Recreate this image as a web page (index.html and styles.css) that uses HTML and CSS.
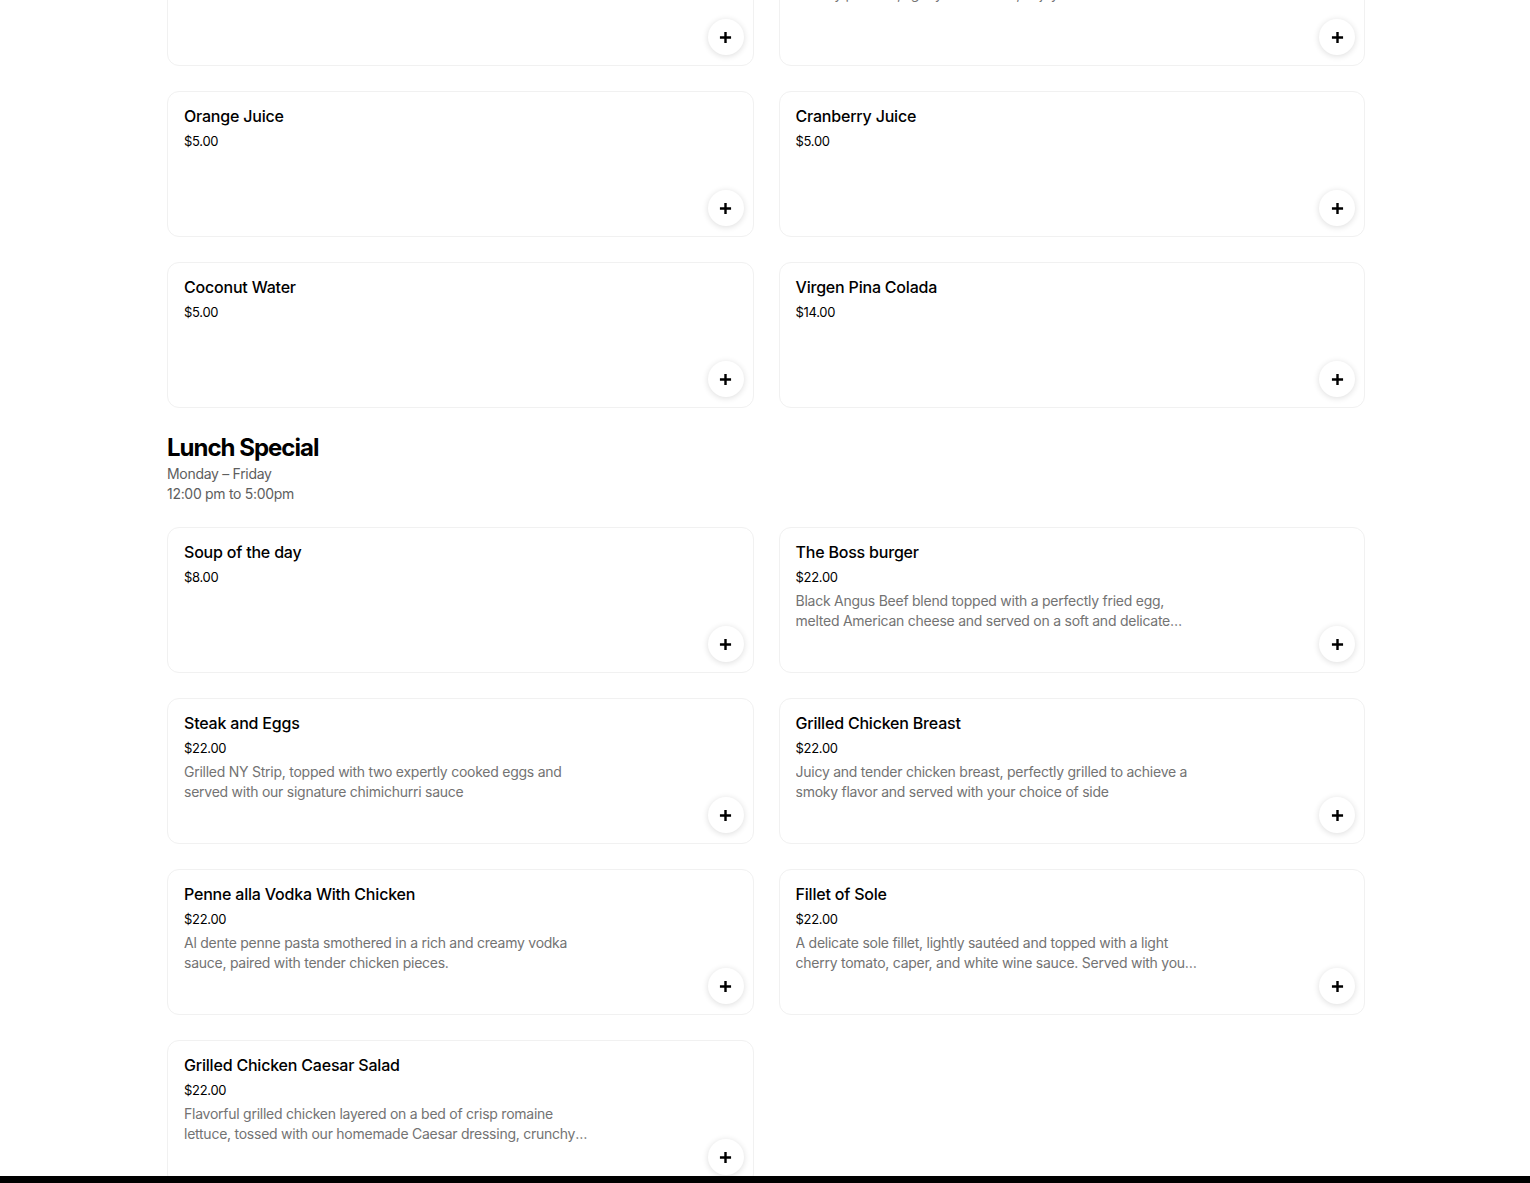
FILE: index.html
```html
<!DOCTYPE html>
<html lang="en">
<head>
  <meta charset="UTF-8" />
  <title>Menu</title>
  <link rel="stylesheet" href="styles.css">
</head>
<body>
  <main class="menu">
    <section class="seccion primera">
      <div class="grid">
        <div class="card">
          <h3 class="nombre">Lemonade</h3>
          <p class="precio">$5.00</p>
          <button class="agregar" aria-label="Add"><svg viewBox="0 0 14 14"><path d="M7 1v12M1 7h12"/></svg></button>
        </div>
        <div class="card">
          <h3 class="nombre">Fresh Fruit Smoothie</h3>
          <p class="precio">$9.00</p>
          <p class="desc">Freshly pressed, lightly sweetened, enjoy.</p>
          <button class="agregar" aria-label="Add"><svg viewBox="0 0 14 14"><path d="M7 1v12M1 7h12"/></svg></button>
        </div>
        <div class="card">
          <h3 class="nombre">Orange Juice</h3>
          <p class="precio">$5.00</p>
          <button class="agregar" aria-label="Add"><svg viewBox="0 0 14 14"><path d="M7 1v12M1 7h12"/></svg></button>
        </div>
        <div class="card">
          <h3 class="nombre">Cranberry Juice</h3>
          <p class="precio">$5.00</p>
          <button class="agregar" aria-label="Add"><svg viewBox="0 0 14 14"><path d="M7 1v12M1 7h12"/></svg></button>
        </div>
        <div class="card">
          <h3 class="nombre">Coconut Water</h3>
          <p class="precio">$5.00</p>
          <button class="agregar" aria-label="Add"><svg viewBox="0 0 14 14"><path d="M7 1v12M1 7h12"/></svg></button>
        </div>
        <div class="card">
          <h3 class="nombre">Virgen Pina Colada</h3>
          <p class="precio">$14.00</p>
          <button class="agregar" aria-label="Add"><svg viewBox="0 0 14 14"><path d="M7 1v12M1 7h12"/></svg></button>
        </div>
      </div>
    </section>

    <section class="seccion">
      <div class="cabecera">
        <h2>Lunch Special</h2>
        <p>Monday – Friday</p>
        <p>12:00 pm to 5:00pm</p>
      </div>
      <div class="grid">
        <div class="card">
          <h3 class="nombre">Soup of the day</h3>
          <p class="precio">$8.00</p>
          <button class="agregar" aria-label="Add"><svg viewBox="0 0 14 14"><path d="M7 1v12M1 7h12"/></svg></button>
        </div>
        <div class="card">
          <h3 class="nombre">The Boss burger</h3>
          <p class="precio">$22.00</p>
          <p class="desc">Black Angus Beef blend topped with a perfectly fried egg, melted American cheese and served on a soft and delicate brioche bun with fries.</p>
          <button class="agregar" aria-label="Add"><svg viewBox="0 0 14 14"><path d="M7 1v12M1 7h12"/></svg></button>
        </div>
        <div class="card">
          <h3 class="nombre">Steak and Eggs</h3>
          <p class="precio">$22.00</p>
          <p class="desc">Grilled NY Strip, topped with two expertly cooked eggs and served with our signature chimichurri sauce</p>
          <button class="agregar" aria-label="Add"><svg viewBox="0 0 14 14"><path d="M7 1v12M1 7h12"/></svg></button>
        </div>
        <div class="card">
          <h3 class="nombre">Grilled Chicken Breast</h3>
          <p class="precio">$22.00</p>
          <p class="desc">Juicy and tender chicken breast, perfectly grilled to achieve a smoky flavor and served with your choice of side</p>
          <button class="agregar" aria-label="Add"><svg viewBox="0 0 14 14"><path d="M7 1v12M1 7h12"/></svg></button>
        </div>
        <div class="card">
          <h3 class="nombre">Penne alla Vodka With Chicken</h3>
          <p class="precio">$22.00</p>
          <p class="desc">Al dente penne pasta smothered in a rich and creamy vodka sauce, paired with tender chicken pieces.</p>
          <button class="agregar" aria-label="Add"><svg viewBox="0 0 14 14"><path d="M7 1v12M1 7h12"/></svg></button>
        </div>
        <div class="card">
          <h3 class="nombre">Fillet of Sole</h3>
          <p class="precio">$22.00</p>
          <p class="desc">A delicate sole fillet, lightly sautéed and topped with a light cherry tomato, caper, and white wine sauce. Served with your choice of side.</p>
          <button class="agregar" aria-label="Add"><svg viewBox="0 0 14 14"><path d="M7 1v12M1 7h12"/></svg></button>
        </div>
        <div class="card">
          <h3 class="nombre">Grilled Chicken Caesar Salad</h3>
          <p class="precio">$22.00</p>
          <p class="desc">Flavorful grilled chicken layered on a bed of crisp romaine lettuce, tossed with our homemade Caesar dressing, crunchy croutons and parmesan.</p>
          <button class="agregar" aria-label="Add"><svg viewBox="0 0 14 14"><path d="M7 1v12M1 7h12"/></svg></button>
        </div>
      </div>
    </section>
  </main>

  <!-- barra inferior -->
  <div class="barra"></div>
</body>
</html>
```

FILE: styles.css
```css
html {
  overflow: hidden;
}

body {
  margin: 0;
  font-family: Inter, "Noto Sans", sans-serif;
  color: #000;
  background: #fff;
}

.menu {
  max-width: 1198px;
  margin: 0 auto;
  padding-left: 2px;
}

.primera {
  margin-top: -80px;
}

.grid {
  display: grid;
  grid-template-columns: 1fr 1fr;
  gap: 25px;
}

.card {
  position: relative;
  height: 146px;
  box-sizing: border-box;
  padding: 14px 16px;
  border: 1px solid #f1f1f1;
  border-radius: 12px;
}

.nombre {
  margin: 0;
  font-size: 16px;
  line-height: 20px;
  font-weight: 500;
  letter-spacing: -0.2px;
}

.precio {
  margin: 5px 0 0;
  font-size: 13px;
  line-height: 20px;
  letter-spacing: -0.3px;
}

.desc {
  margin: 4px 0 0;
  max-width: 405px;
  font-size: 14px;
  line-height: 20px;
  letter-spacing: -0.25px;
  color: #737373;
  display: -webkit-box;
  -webkit-line-clamp: 2;
  -webkit-box-orient: vertical;
  overflow: hidden;
}

/* boton + */
.agregar {
  position: absolute;
  right: 9px;
  bottom: 10px;
  width: 36px;
  height: 36px;
  padding: 0;
  border: none;
  border-radius: 50%;
  background: #fff;
  box-shadow: 0 1px 6px rgba(0,0,0,0.14);
  display: flex;
  align-items: center;
  justify-content: center;
  cursor: pointer;
}

.agregar svg {
  width: 13px;
  height: 13px;
  stroke: #000;
  stroke-width: 2.6;
  fill: none;
}

.cabecera {
  margin: 24px 0 23px;
}

.cabecera h2 {
  margin: 0;
  font-size: 24px;
  line-height: 32px;
  font-weight: 700;
  letter-spacing: -1px;
}

.cabecera p {
  margin: 0;
  font-size: 14px;
  line-height: 20px;
  letter-spacing: -0.3px;
  color: #5e5e5e;
}

.barra {
  position: fixed;
  left: 0;
  right: 0;
  bottom: 0;
  height: 7px;
  background: #000;
}
```
